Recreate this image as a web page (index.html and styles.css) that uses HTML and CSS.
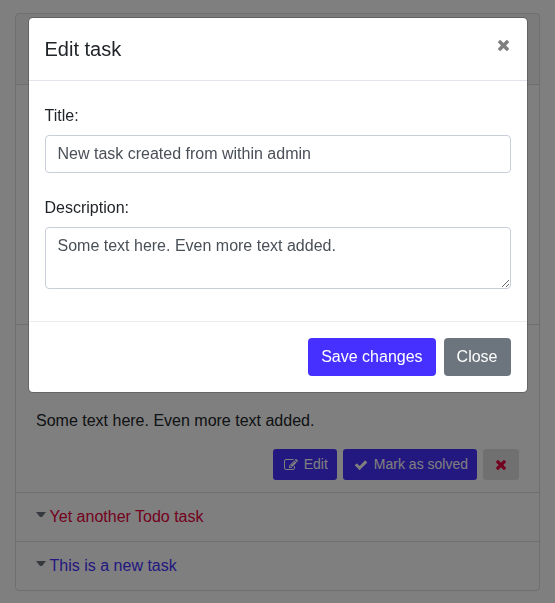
FILE: index.html
```html
<!DOCTYPE html>
<html lang="en">
<head>
<meta charset="utf-8">
<title>Todo</title>
<link rel="stylesheet" href="styles.css">
</head>
<body>
<main class="card">
  <header class="card-header"></header>
  <section class="row row-hidden"></section>
  <section class="row row-open">
    <p class="description">Some text here. Even more text added.</p>
    <div class="actions">
      <button class="btn btn-sm btn-primary"><svg class="icon-edit" width="14" height="12" viewBox="0 0 1792 1536" fill="currentColor"><path d="M888 1056l116-116-152-152-116 116v56h96v96h56zm440-720q-16-16-33 1L945 687q-17 17-1 33t33-1l350-350q17-17 1-33zm80 594v190q0 119-84.500 203.500T1120 1408H288q-119 0-203.500-84.500T0 1120V288Q0 169 84.500 84.500T288 0h832q63 0 117 25 15 7 18 23 3 17-9 29l-49 49q-14 14-32 8-23-6-45-6H288q-66 0-113 47t-47 113v832q0 66 47 113t113 47h832q66 0 113-47t47-113V994q0-13 9-22l64-64q15-15 35-7t20 29zm-96-738l288 288-672 672H640V864zm444 132l-92 92-288-288 92-92q28-28 68-28t68 28l152 152q28 28 28 68t-28 68z"/></svg><span>Edit</span></button>
      <button class="btn btn-sm btn-primary"><svg class="icon-check" width="14" height="14" viewBox="0 0 1792 1792" fill="currentColor"><path d="M1671 566q0 40-28 68l-724 724-136 136q-28 28-68 28t-68-28l-136-136-362-362q-28-28-28-68t28-68l136-136q28-28 68-28t68 28l294 295 656-657q28-28 68-28t68 28l136 136q28 28 28 68z"/></svg><span>Mark as solved</span></button>
      <button class="btn btn-sm btn-light" aria-label="Delete"><svg width="10" height="10" viewBox="0 0 1188 1188" fill="currentColor"><path d="M1188 956q0 40-28 68l-136 136q-28 28-68 28t-68-28L594 866l-294 294q-28 28-68 28t-68-28L28 1024q-28-28-28-68t28-68l294-294L28 300Q0 272 0 232t28-68L164 28q28-28 68-28t68 28l294 294L888 28q28-28 68-28t68 28l136 136q28 28 28 68t-28 68L866 594l294 294q28 28 28 68z"/></svg></button>
    </div>
  </section>
  <section class="row row-item"><span class="caret"></span><a class="danger">Yet another Todo task</a></section>
  <section class="row row-item"><span class="caret"></span><a class="primary">This is a new task</a></section>
</main>
<div class="backdrop"></div>
<div class="modal" role="dialog" aria-label="Edit task">
  <header class="modal-header">
    <h5>Edit task</h5>
    <button class="close" aria-label="Close"><svg width="11" height="11" viewBox="0 0 1188 1188" fill="currentColor"><path d="M1188 956q0 40-28 68l-136 136q-28 28-68 28t-68-28L594 866l-294 294q-28 28-68 28t-68-28L28 1024q-28-28-28-68t28-68l294-294L28 300Q0 272 0 232t28-68L164 28q28-28 68-28t68 28l294 294L888 28q28-28 68-28t68 28l136 136q28 28 28 68t-28 68L866 594l294 294q28 28 28 68z"/></svg></button>
  </header>
  <div class="modal-body">
    <label for="title">Title:</label>
    <input id="title" class="control" type="text" value="New task created from within admin">
    <label for="text">Description:</label>
    <textarea id="text" class="control" rows="2">Some text here. Even more text added.</textarea>
  </div>
  <footer class="modal-footer">
    <button class="btn btn-primary">Save changes</button>
    <button class="btn btn-secondary">Close</button>
  </footer>
</div>
</body>
</html>
```
FILE: styles.css
```css
*, *::before, *::after { box-sizing: border-box; }

html { overflow: hidden; }

body {
  margin: 0;
  padding: 13px 15px;
  background: #fff;
  color: #212529;
  font: 16px/24px "Liberation Sans", Arial, sans-serif;
}

button, input, textarea { font: inherit; margin: 0; }

.card {
  border: 1px solid rgba(0, 0, 0, .125);
  border-radius: 4px;
}

.card-header {
  height: 70px;
  background: rgba(0, 0, 0, .03);
}

.row {
  border-top: 1px solid rgba(0, 0, 0, .125);
  padding: 12px 20px;
}

.row-hidden { height: 240px; }

.row-open {
  height: 168px;
  padding-top: 84px;
}

.description { margin: 0 0 16px; }

.actions {
  display: flex;
  justify-content: flex-end;
  gap: 6px;
}

.row-item {
  display: flex;
  height: 49px;
}

.caret {
  width: 9.6px;
  height: 5px;
  margin: 7px 4px 0 0;
  border: 4.8px solid transparent;
  border-top: 5px solid #6c757d;
  border-bottom: 0;
}

.danger { color: #e6003c; }
.primary { color: #4630ff; }

.btn {
  display: flex;
  align-items: center;
  justify-content: center;
  height: 38px;
  padding: 0 12px;
  border: 1px solid transparent;
  border-radius: 4px;
  color: #fff;
  white-space: nowrap;
}

.btn-primary { background: #4630ff; }
.btn-secondary { background: #6c757d; }
.btn-light { background: #e0e0e0; color: #e6003c; }

.btn-sm {
  height: 31px;
  padding: 0 8px;
  border-radius: 3px;
  font-size: 14px;
  line-height: 21px;
}

.icon-edit { margin: 0 6px 0 2px; }
.icon-check { margin: 0 6px 0 2px; }
.btn-light svg { margin: 0 4px; }

.backdrop {
  position: fixed;
  inset: 0;
  background: rgba(0, 0, 0, .5);
}

.modal {
  position: absolute;
  top: 17px;
  left: 27.5px;
  width: 500px;
  background: #fff;
  background-clip: padding-box;
  border: 1px solid rgba(0, 0, 0, .2);
  border-radius: 5px;
}

.modal-header {
  display: flex;
  justify-content: space-between;
  height: 63px;
  padding: 16px;
  border-bottom: 1px solid #e2e5ec;
}

.modal-header h5 {
  margin: 0;
  font-size: 20px;
  font-weight: 400;
  line-height: 30px;
}

.close {
  display: flex;
  height: 11px;
  margin: 6px 1.5px 0 0;
  padding: 0;
  border: 0;
  background: none;
  color: #808080;
}

.modal-body {
  height: 240px;
  padding: 23px 16px 0;
}

.modal-body label {
  display: block;
  margin-bottom: 7px;
}

.control {
  display: block;
  width: 100%;
  height: 38px;
  margin-bottom: 23px;
  padding: 6px 12px;
  border: 1px solid #c9cedb;
  border-radius: 4px;
  background: #fff;
  color: #495057;
}

textarea.control {
  height: 62px;
  margin-bottom: 0;
  overflow: auto;
  resize: vertical;
}

.modal-footer {
  display: flex;
  justify-content: flex-end;
  gap: 8px;
  padding: 16px;
  border-top: 1px solid #e9ecef;
}
```
